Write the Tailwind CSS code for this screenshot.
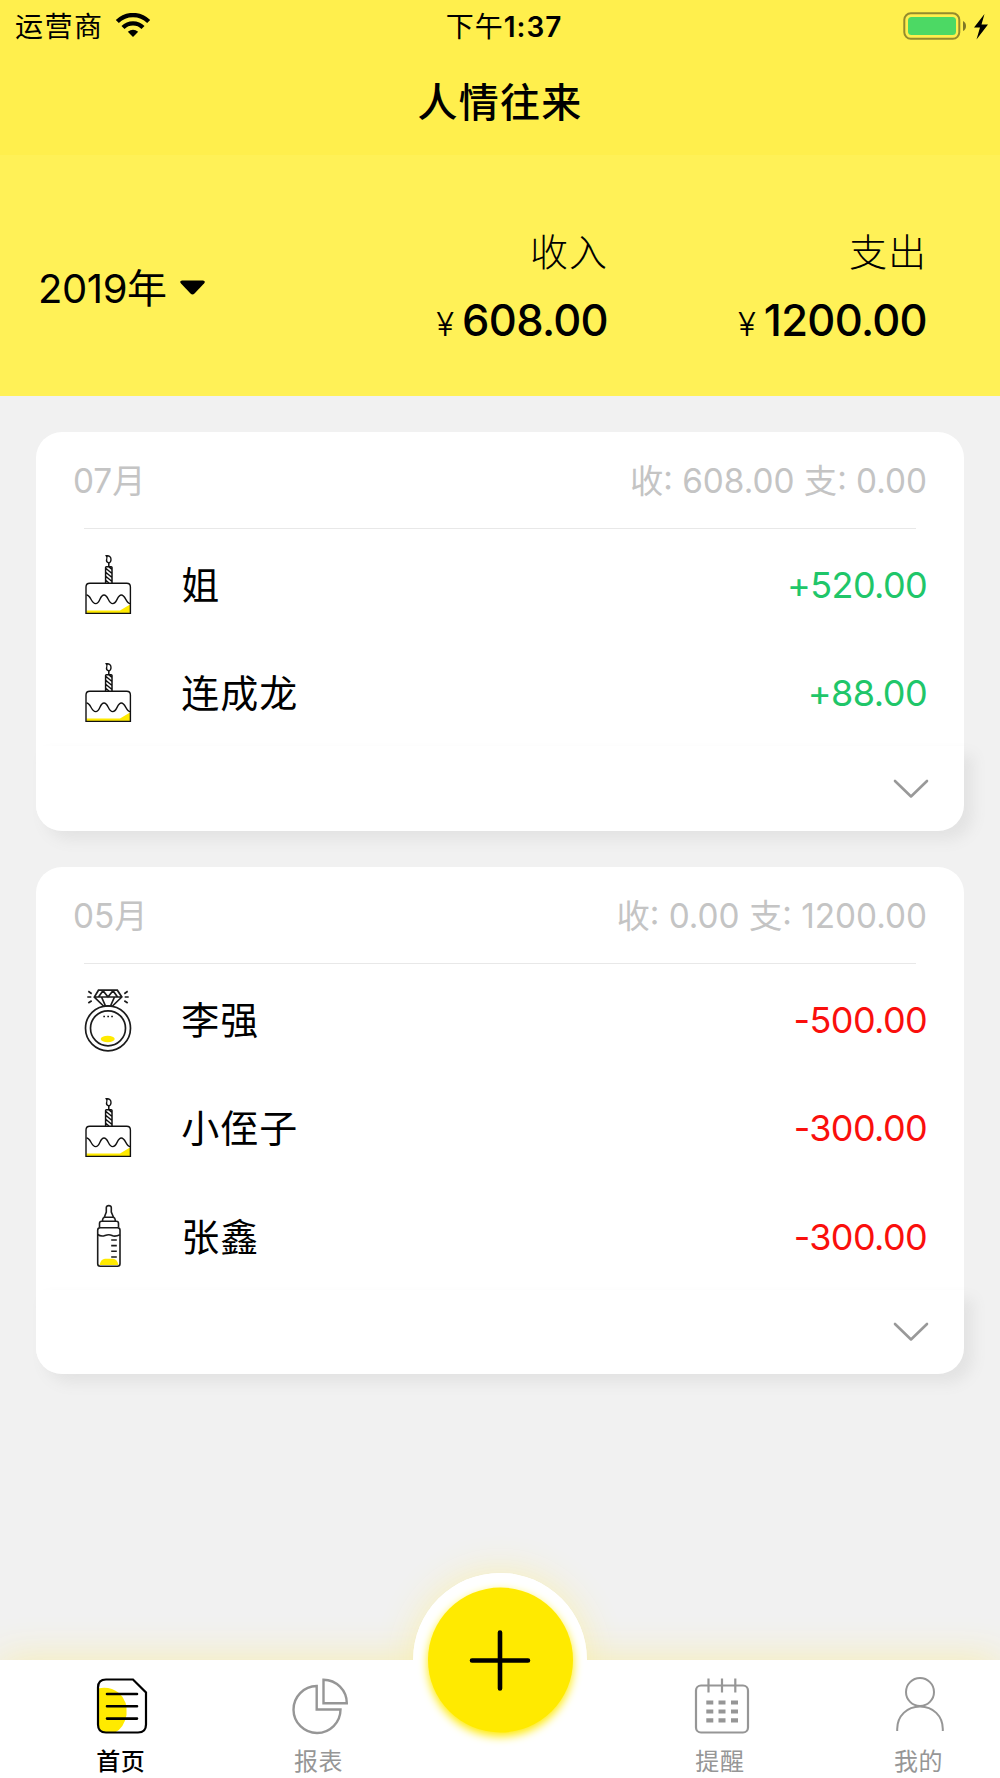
<!DOCTYPE html>
<html lang="zh-CN">
<head>
<meta charset="utf-8">
<title>人情往来</title>
<script src="https://cdn.jsdelivr.net/npm/@tailwindcss/browser@4"></script>
</head>
<body class="bg-[#f1f1f1] font-['Inter','Noto_Sans_CJK_SC',sans-serif] text-black">
<svg class="hidden">
  <symbol id="cake" viewBox="0 0 48 62">
    <path d="M2.5 57.4H36L46 51.5V60H2.5Z" fill="#ffea00"/>
    <g fill="none" stroke="#111" stroke-width="1.4">
      <path d="M2 60.4V34Q2 30.3 5.8 30.3H42.7Q46.4 30.3 46.4 34V60.4Z"/>
      <path d="M2.5 42C7 42 7 50.6 11.7 50.6S15.5 42 20 42S24 50.6 28.7 50.6S33 42 37.3 42S42 50.6 46.3 50.6"/>
      <path d="M21.6 30V14.6Q21.6 13.8 22.4 13.8H27.2Q28 13.8 28 14.6V30M22 15.5L28 20.5M22 19.5L28 24.5M22 23.5L28 28.5M22 27.5L25 30M25 14L28 16.5M24.8 13.8V9.8" stroke-width="1.5"/>
      <path d="M22.3 2.8C25 2.2 27.3 4 27 7Q26.6 9.7 24.6 9.9Q22 9 22.6 6.8Q23.7 4.5 22.3 2.8Z"/>
    </g>
  </symbol>
</svg>
<div class="relative h-[1778px] w-[1000px] overflow-hidden">
  <header class="h-[155px] bg-[#ffef4d]">
    <div class="grid h-[50px] grid-cols-[1fr_auto_1fr] items-center pr-[10px] pl-[15px]">
      <div class="flex items-center gap-[11px]">
        <span class="pt-[2px] text-[28px] leading-[50px] tracking-[1.5px]">运营商</span>
        <svg class="h-[26px] w-[36px]" viewBox="0 0 36 26" fill="none" stroke="#000" stroke-width="4.3">
          <path d="M2.3 8.600C11 -.2 25 -.2 33.700 8.600M8 14.400C13.500 8.900 22.500 8.900 28 14.400"/>
          <path d="M18 24L12.800 18.800Q18 14.600 23.200 18.800Z" fill="#000" stroke="none"/>
        </svg>
      </div>
      <span class="pt-[2px] pl-[3px] text-[28px] leading-[50px] tracking-[1px]">下午<span class="font-semibold">1:37</span></span>
      <div class="flex items-center justify-end">
        <svg class="h-[30px] w-[88px]" viewBox="0 1 88 30">
          <rect x="2.300" y="3.300" width="55" height="25.500" rx="6.500" fill="none" stroke="#000" stroke-opacity=".42" stroke-width="2"/>
          <rect x="6" y="7" width="48" height="18" rx="3.500" fill="#4cd964"/>
          <path d="M61 11Q64 12.500 64 16T61 21Z" fill="#000" fill-opacity=".5"/>
          <path d="M82.500 4L72 17.500H78L74.500 29.500L86 14.500H79.500Z"/>
        </svg>
      </div>
    </div>
    <h1 class="pt-[23px] text-center text-[40px] leading-[60px] font-medium tracking-[1.3px]">人情往来</h1>
  </header>

  <section class="flex h-[241px] bg-[#fff157]">
    <div class="flex w-[300px] items-center gap-[12px] pt-[24px] pl-[38px]">
      <span class="pt-[2px] text-[40px] leading-[60px] tracking-[-.4px]">2019年</span>
      <svg class="h-[17px] w-[27px]" viewBox="0 0 27 17"><path d="M3 1.500H24Q27 2 25 4.500L15.500 14.500Q13.500 16.500 11.500 14.500L2 4.500Q0 2 3 1.500Z"/></svg>
    </div>
    <div class="w-[308px] pt-[69px] text-right">
      <div class="text-[38px] leading-[56px] font-light tracking-[1px]">收入</div>
      <div class="mt-[10px] leading-[60px]"><span class="mr-[8px] text-[33px] font-light">¥</span><span class="text-[43.500px] font-medium tracking-[-.7px]">608.00</span></div>
    </div>
    <div class="w-[319px] pt-[69px] text-right">
      <div class="text-[38px] leading-[56px] font-light tracking-[1px]">支出</div>
      <div class="mt-[10px] leading-[60px]"><span class="mr-[8px] text-[33px] font-light">¥</span><span class="text-[43.500px] font-medium tracking-[-.7px]">1200.00</span></div>
    </div>
  </section>

  <main class="flex flex-col gap-[36px] px-[36.300px] pt-[36.400px]">
    <section class="h-[399px] rounded-[26px] bg-white">
      <div class="flex h-[96px] items-center justify-between px-[36.700px] pt-[3px] text-[33.300px] text-[#c4c4c4]"><span>07月</span><span>收: 608.00 支: 0.00</span></div>
      <div class="mx-[48px] h-px bg-[#e8e8e8]"></div>
      <div class="flex h-[108.500px] items-center pr-[36.500px] pl-[48px]">
        <svg class="h-[62px] w-[48px]"><use href="#cake"/></svg>
        <span class="ml-[49px] flex-1 pt-[3px] text-[38px] tracking-[1px]">姐</span><span class="pt-[2px] text-[36px] tracking-[-.6px] text-[#20c669]">+520.00</span>
      </div>
      <div class="flex h-[108.500px] items-center pr-[36.500px] pl-[48px]">
        <svg class="h-[62px] w-[48px]"><use href="#cake"/></svg>
        <span class="ml-[49px] flex-1 pt-[3px] text-[38px] tracking-[1px]">连成龙</span><span class="pt-[2px] text-[36px] tracking-[-.5px] text-[#20c669]">+88.00</span>
      </div>
      <div class="flex h-[85px] items-center justify-end rounded-b-[26px] bg-white pr-[34px] shadow-[9px_9px_14px_#e3e3e3]">
        <svg class="h-[22px] w-[38px]" viewBox="0 0 38 22" fill="none" stroke="#999" stroke-width="2.600" stroke-linecap="round" stroke-linejoin="round"><path d="M3 3L19 18.500L35 3"/></svg>
      </div>
    </section>

    <section class="h-[507px] rounded-[26px] bg-white">
      <div class="flex h-[96px] items-center justify-between px-[36.700px] pt-[3px] text-[33.300px] text-[#c4c4c4]"><span>05月</span><span>收: 0.00 支: 1200.00</span></div>
      <div class="mx-[48px] h-px bg-[#e8e8e8]"></div>
      <div class="flex h-[108.500px] items-center pr-[36.500px] pl-[48px]">
        <svg class="h-[66px] w-[48px] translate-y-px" viewBox="0 0 48 66" fill="none" stroke="#1c1c1c" stroke-width="1.700">
          <circle cx="24" cy="41.300" r="22.500"/><circle cx="24" cy="41.300" r="17.500"/>
          <path d="M14.500 3.200H33.300L37.800 10L28.500 19H19.500L10.300 10ZM10.300 10H37.800M14.500 10L19 3.700L24 10L29 3.700L33.500 10M17.500 10L21.500 19M30.500 10L26.500 19"/>
          <path d="M4.300 4.300L7.700 6.700M3.300 10H7.300M4.300 16L7.700 13.700M43.700 4.300L40.300 6.700M44.700 10H40.700M43.700 16L40.300 13.700"/>
          <path d="M19.300 29.500H21M23.300 29.500H25M27.200 29.500H28.900" stroke-width="1.400"/>
          <ellipse cx="23.700" cy="52" rx="7" ry="3.200" fill="#ffea00" stroke="none"/>
        </svg>
        <span class="ml-[49px] flex-1 pt-[3px] text-[38px] tracking-[1px]">李强</span><span class="pt-[2px] text-[36px] tracking-[-.6px] text-[#fa0f0c]">-500.00</span>
      </div>
      <div class="flex h-[108.500px] items-center pr-[36.500px] pl-[48px]">
        <svg class="h-[62px] w-[48px]"><use href="#cake"/></svg>
        <span class="ml-[49px] flex-1 pt-[3px] text-[38px] tracking-[1px]">小侄子</span><span class="pt-[2px] text-[36px] tracking-[-.6px] text-[#fa0f0c]">-300.00</span>
      </div>
      <div class="flex h-[108.500px] items-center pr-[36.500px] pl-[48px]">
        <svg class="h-[64px] w-[48px]" viewBox="0 0 48 64" fill="none" stroke="#1c1c1c" stroke-width="1.600">
          <path d="M15.500 61Q17 54.800 21 54.800H29Q33 54.800 34.500 61Z" fill="#ffea00" stroke="none"/>
          <rect x="13.700" y="23.700" width="22.300" height="38.500" rx="2.500"/>
          <path d="M20.300 13.300L22.300 8V3.500Q22.500 1.600 24.800 1.600T27.300 3.500V8L29.500 13.300M18.500 17.300Q18.500 13.300 21 13.300H28.800Q31.300 13.300 31.300 17.300M15.500 23.500V19.500Q15.500 17.300 17.700 17.300H32.300Q34.500 17.300 34.500 19.500V23.500"/>
          <path d="M13.700 30.500Q17 33 21 31.500T28 31.500T36 30.800"/>
          <path d="M27.200 36H32.800M27.200 41.600H32.800M27.200 47.300H32.800M27.200 53H32.800"/>
        </svg>
        <span class="ml-[49px] flex-1 pt-[3px] text-[38px] tracking-[1px]">张鑫</span><span class="pt-[2px] text-[36px] tracking-[-.6px] text-[#fa0f0c]">-300.00</span>
      </div>
      <div class="flex h-[84.500px] items-center justify-end rounded-b-[26px] bg-white pr-[34px] shadow-[9px_9px_14px_#e3e3e3]">
        <svg class="h-[22px] w-[38px]" viewBox="0 0 38 22" fill="none" stroke="#999" stroke-width="2.600" stroke-linecap="round" stroke-linejoin="round"><path d="M3 3L19 18.500L35 3"/></svg>
      </div>
    </section>
  </main>

  <!-- raised halo behind the tab bar -->
  <div class="absolute top-[1573px] left-[413px] size-[174px] rounded-full bg-white shadow-[0_0_36px_#f9f0b4]"></div>
  <nav class="absolute bottom-0 left-0 grid h-[118.500px] w-full grid-cols-[repeat(5,199.700px)] bg-white pl-[20px] text-center text-[24px] leading-[36px] tracking-[.6px] text-[#969696] shadow-[0_0_38px_#f7edb0]">
    <div class="pt-[17.500px] font-medium text-black">
      <svg class="mx-auto h-[58px] w-[56px] translate-x-[2px]" viewBox="0 0 56 58" fill="none">
        <path d="M4 11.500Q16 9 25 16Q34 24 32.500 38Q30 51 21 55.500H12Q4 54 4 46Z" fill="#ffea00"/>
        <path d="M39 2.500H12Q4 2.500 4 10.500V47.500Q4 55.500 12 55.500H44Q52 55.500 52 47.500V15.500Z" stroke="#000" stroke-width="2.200"/>
        <path d="M13 17H43M13 29.200H43M13 41.600H43" stroke="#000" stroke-width="2.600" stroke-linecap="round"/>
      </svg>
      <div class="mt-[8.500px] translate-x-px">首页</div>
    </div>
    <div class="pt-[17.500px]">
      <svg class="mx-auto h-[58px] w-[58px]" viewBox="0 0 58 58" fill="none" stroke="#969696" stroke-width="2.400">
        <path d="M25.700 9A23.500 23.500 0 1 0 49.500 32.500H25.700Z"/><path d="M32.500 2.700V26.200H55.800A23.500 23.500 0 0 0 32.500 2.700Z"/>
      </svg>
      <div class="mt-[8.500px] -translate-x-px">报表</div>
    </div>
    <div></div>
    <div class="pt-[17.500px]">
      <svg class="mx-auto h-[58px] w-[56px] translate-x-[3px]" viewBox="0 0 56 58" fill="none" stroke="#969696" stroke-width="2.200">
        <rect x="2" y="8.500" width="52" height="47" rx="5"/>
        <path d="M14.500 1.500V15.500M28 1.500V15.500M41.300 1.500V15.500"/>
        <path d="M12.300 25.500H19.300M24.500 25.500H31.500M37 25.500H44M12.300 34.500H19.300M24.500 34.500H31.500M37 34.500H44M12.300 43.300H19.300M24.500 43.300H31.500M37 43.300H44" stroke-width="4.200"/>
      </svg>
      <div class="mt-[8.500px] translate-x-px">提醒</div>
    </div>
    <div class="pt-[17.500px]">
      <svg class="mx-auto h-[58px] w-[52px] translate-x-px" viewBox="0 0 52 58" fill="none" stroke="#969696" stroke-width="2">
        <circle cx="26" cy="15" r="14"/><path d="M3.200 54V52C3.200 39 13 29.500 26 29.500S48.800 39 48.800 52V54"/>
      </svg>
      <div class="mt-[8.500px]">我的</div>
    </div>
  </nav>
  <div class="absolute top-[1573px] left-[413px] flex size-[174px] items-center justify-center rounded-full bg-white">
    <div class="flex size-[145px] -translate-y-[.5px] items-center justify-center rounded-full bg-[#ffea00] shadow-[0_4px_10px_#ffea00]">
      <svg class="size-[66px]" viewBox="0 0 66 66" stroke="#000" stroke-width="4.600" stroke-linecap="round"><path d="M5 34H61M33 6V62"/></svg>
    </div>
  </div>
</div>
</body>
</html>
